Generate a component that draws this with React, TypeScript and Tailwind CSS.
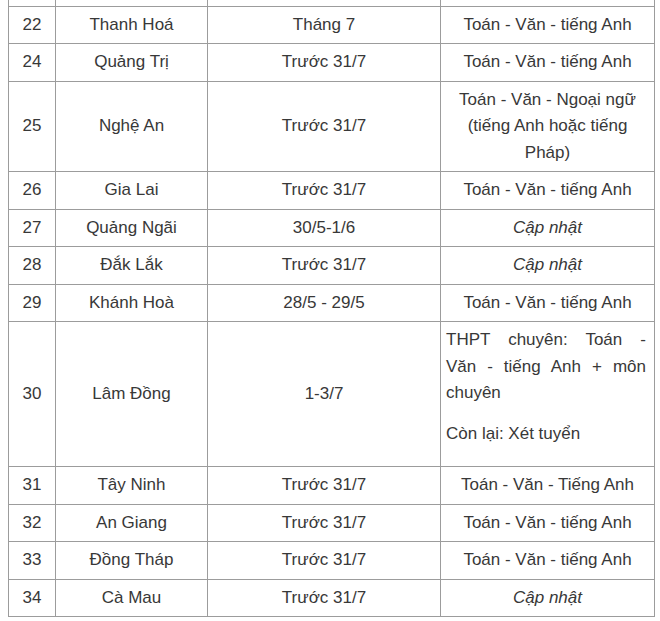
type Row = {
  no: string;
  province: string;
  date: string;
  subjects: React.ReactNode;
};

const rows: Row[] = [
  { no: "22", province: "Thanh Hoá", date: "Tháng 7", subjects: "Toán - Văn - tiếng Anh" },
  { no: "24", province: "Quảng Trị", date: "Trước 31/7", subjects: "Toán - Văn - tiếng Anh" },
  {
    no: "25",
    province: "Nghệ An",
    date: "Trước 31/7",
    subjects: "Toán - Văn - Ngoại ngữ (tiếng Anh hoặc tiếng Pháp)",
  },
  { no: "26", province: "Gia Lai", date: "Trước 31/7", subjects: "Toán - Văn - tiếng Anh" },
  { no: "27", province: "Quảng Ngãi", date: "30/5-1/6", subjects: <em>Cập nhật</em> },
  { no: "28", province: "Đắk Lắk", date: "Trước 31/7", subjects: <em>Cập nhật</em> },
  { no: "29", province: "Khánh Hoà", date: "28/5 - 29/5", subjects: "Toán - Văn - tiếng Anh" },
  { no: "30", province: "Lâm Đồng", date: "1-3/7", subjects: null },
  { no: "31", province: "Tây Ninh", date: "Trước 31/7", subjects: "Toán - Văn - Tiếng Anh" },
  { no: "32", province: "An Giang", date: "Trước 31/7", subjects: "Toán - Văn - tiếng Anh" },
  { no: "33", province: "Đồng Tháp", date: "Trước 31/7", subjects: "Toán - Văn - tiếng Anh" },
  { no: "34", province: "Cà Mau", date: "Trước 31/7", subjects: <em>Cập nhật</em> },
];

const cell = "border border-[#9c9c9c] px-[5px] py-[5px] text-center align-middle";

export default function App() {
  return (
    <div
      className="h-[621px] overflow-hidden bg-white text-[#383838] text-[17px] leading-[26.5px]"
      style={{ fontFamily: '"Liberation Sans", Arial, sans-serif' }}
    >
      <table className="ml-[8px] w-[646px] table-fixed border-collapse">
        <colgroup>
          <col className="w-[47px]" />
          <col className="w-[152px]" />
          <col className="w-[233px]" />
          <col className="w-[214px]" />
        </colgroup>
        <tbody>
          {/* tail of the previous row, cut off by the crop */}
          <tr className="h-[6px]">
            <td className="border-x border-b border-[#9c9c9c] p-0" />
            <td className="border-x border-b border-[#9c9c9c] p-0" />
            <td className="border-x border-b border-[#9c9c9c] p-0" />
            <td className="border-x border-b border-[#9c9c9c] p-0" />
          </tr>
          {rows.map((r) => (
            <tr key={r.no}>
              <td className={cell}>{r.no}</td>
              <td className={cell}>{r.province}</td>
              <td className={cell}>{r.date}</td>
              {r.subjects === null ? (
                <td className="border border-[#9c9c9c] pl-[5px] pr-[8px] py-[5px] text-justify align-middle">
                  <p className="mb-[14px] [word-spacing:2px]">
                    THPT chuyên: Toán - Văn - tiếng Anh + môn chuyên
                  </p>
                  <p className="mb-[14px]">Còn lại: Xét tuyển</p>
                </td>
              ) : (
                <td className={cell}>{r.subjects}</td>
              )}
            </tr>
          ))}
        </tbody>
      </table>
      <p className="px-[8px]">
        Nhìn chung, hầu hết các tỉnh thành đều tổ chức thi ba môn Toán, Văn, tiếng Anh.
      </p>
    </div>
  );
}
